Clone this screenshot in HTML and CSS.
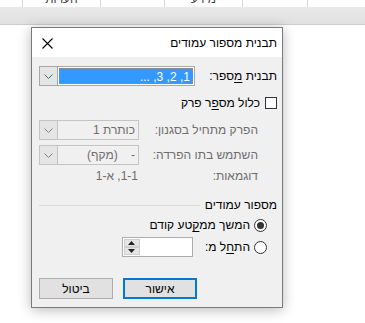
FILE: index.html
```html
<!DOCTYPE html>
<html lang="he">
<head>
    <meta charset="UTF-8">
    <title>תבנית מספור עמודים</title>
    <link rel="stylesheet" href="styles.css">
</head>
<body>
    <div class="ribbon">
        <div class="cell c1"></div>
        <div class="cell c2"><span>הערות</span></div>
        <div class="cell c3"></div>
        <div class="cell c4"><span>מידע</span></div>
        <div class="cell c5"></div>
        <div class="cell c6"></div>
    </div>
    <div class="band"></div>
    <div class="doc"></div>

    <div class="dialog" dir="rtl">
        <div class="titlebar">
            <span class="title">תבנית מספור עמודים</span>
            <span class="close">
                <svg width="11" height="11" viewBox="0 0 11 11"><path d="M0.5 0.5 L10.5 10.5 M10.5 0.5 L0.5 10.5" stroke="#000" stroke-width="1.1" fill="none"/></svg>
            </span>
        </div>
        <div class="content">
            <div class="row r-format">
                <label>תבנית <u>מ</u>ספר:</label>
                <div class="combo wide">
                    <span class="value"><span class="selected">1, 2, 3, ...</span></span>
                    <span class="arrow"><svg width="9" height="5" viewBox="0 0 9 5"><path d="M0.5 0.5 L4.5 4.5 L8.5 0.5" stroke="#606060" fill="none"/></svg></span>
                </div>
            </div>
            <div class="row r-check">
                <span class="checkbox"></span>
                <label>כלול מס<u>פ</u>ר פרק</label>
            </div>
            <div class="row r-sub disabled">
                <label>הפרק מתחיל בסגנון:</label>
                <div class="combo">
                    <span class="value">כותרת 1</span>
                    <span class="arrow"><svg width="9" height="5" viewBox="0 0 9 5"><path d="M0.5 0.5 L4.5 4.5 L8.5 0.5" stroke="#808080" fill="none"/></svg></span>
                </div>
            </div>
            <div class="row r-sub r-sep disabled">
                <label>השתמש בתו הפרדה:</label>
                <div class="combo">
                    <span class="value">-&nbsp;&nbsp;&nbsp;&nbsp;(מקף)</span>
                    <span class="arrow"><svg width="9" height="5" viewBox="0 0 9 5"><path d="M0.5 0.5 L4.5 4.5 L8.5 0.5" stroke="#808080" fill="none"/></svg></span>
                </div>
            </div>
            <div class="row r-sub r-examples disabled">
                <label>דוגמאות:</label>
                <span class="example">1-1, א-1</span>
            </div>
            <div class="group">
                <span class="group-title">מספור עמודים</span>
                <span class="group-line"></span>
            </div>
            <div class="row r-radio">
                <span class="radio checked"></span>
                <label>המשך ממ<u>ק</u>טע קודם</label>
            </div>
            <div class="row r-radio r-start">
                <span class="radio"></span>
                <label>הת<u>ח</u>ל מ:</label>
                <div class="spin">
                    <span class="spin-value"></span>
                    <span class="spin-buttons">
                        <span class="spin-btn"><svg width="7" height="4" viewBox="0 0 7 4"><path d="M0 4 L3.5 0 L7 4 Z" fill="#222"/></svg></span>
                        <span class="spin-btn"><svg width="7" height="4" viewBox="0 0 7 4"><path d="M0 0 L3.5 4 L7 0 Z" fill="#222"/></svg></span>
                    </span>
                </div>
            </div>
            <div class="buttons">
                <button class="btn default">אישור</button>
                <button class="btn">ביטול</button>
            </div>
        </div>
    </div>
</body>
</html>
```

FILE: styles.css
```css
body {
    margin: 0;
    padding: 0;
    background-color: #fff;
    font-family: "Liberation Sans", "DejaVu Sans", sans-serif;
    font-size: 12px;
    color: #000;
    overflow: hidden;
}

/* Word ribbon cut off at the top */
.ribbon {
    display: flex;
    height: 7px;
    overflow: hidden;
    background-color: #fff;
}

.ribbon .cell {
    height: 7px;
    border-right: 1px solid #d6d6d6;
    text-align: center;
    overflow: hidden;
    box-sizing: border-box;
}

.ribbon .cell span {
    display: block;
    line-height: 12px;
    margin-top: -7px;
    color: #444;
}

.c1 { width: 23px; }
.c2 { width: 78px; }
.c3 { width: 64px; }
.c4 { width: 78px; }
.c5 { width: 65px; }
.c6 { width: 57px; border-right: none !important; }

.band {
    height: 17px;
    background: linear-gradient(#e9e9e9, #e1e1e1);
    border-bottom: 1px solid #cdcdcd;
}

.doc {
    height: 300px;
    background-color: #fff;
}

/* The dialog window */
.dialog {
    position: absolute;
    left: 31px;
    top: 27px;
    width: 250px;
    border: 1px solid #7a7a7a;
    background-color: #f0f0f0;
    box-shadow: 0 2px 12px rgba(0, 0, 0, 0.28);
}

.titlebar {
    display: flex;
    align-items: center;
    height: 29px;
    background-color: #fff;
    padding: 0 5px 0 10px;
}

.title {
    padding-top: 1px;
}

.close {
    margin-right: auto;
    display: flex;
    margin-top: 2px;
}

.content {
    padding: 9px 5px 8px 7px;
}

.row {
    display: flex;
    align-items: center;
}

.row label {
    white-space: nowrap;
}

u {
    text-decoration: underline;
    text-underline-offset: 2px;
}

.r-format {
    height: 20px;
}

.r-format .combo {
    margin-right: auto;
}

.combo {
    display: flex;
    height: 20px;
    width: 100px;
    box-sizing: border-box;
    border: 1px solid #c4c4c4;
    background-color: #f0f0f0;
}

.combo.wide {
    width: 156px;
    border-color: #a8a8a8;
    background-color: #fff;
}

.combo .value {
    flex: 1;
    display: flex;
    align-items: center;
    padding-right: 3px;
    white-space: nowrap;
}

.combo.wide .value {
    padding: 1px;
}

.selected {
    display: block;
    width: 100%;
    height: 100%;
    box-sizing: border-box;
    background-color: #3399ff;
    color: #fff;
    outline: 1px dotted #d47a2a;
    outline-offset: -1px;
    padding: 2px 3px 0 0;
}

.combo .arrow {
    width: 17px;
    display: flex;
    align-items: center;
    justify-content: center;
    background-color: #e5e5e5;
    border-right: 1px solid #c4c4c4;
}

.combo.wide .arrow {
    border-right-color: #a8a8a8;
}

.r-check {
    height: 20px;
    margin-top: 7px;
}

.checkbox {
    width: 12px;
    height: 12px;
    box-sizing: border-box;
    border: 1px solid #333;
    background-color: #fff;
    margin-left: 5px;
}

.r-sub {
    padding-right: 19px;
}

.r-sub .combo,
.r-sub .example {
    margin-right: auto;
}

.disabled {
    color: #6d6d6d;
}

.r-sub:nth-child(3) {
    height: 20px;
    margin-top: 7px;
}

.r-sep {
    height: 20px;
    margin-top: 5px;
}

.r-examples {
    height: 16px;
    margin-top: 3px;
}

.example {
    width: 99px;
    text-align: right;
}

.group {
    display: flex;
    align-items: center;
    height: 14px;
    margin-top: 14px;
}

.group-title {
    white-space: nowrap;
}

.group-line {
    flex: 1;
    height: 1px;
    background-color: #dcdcdc;
    margin-right: 5px;
}

.r-radio {
    height: 16px;
    margin-top: 5px;
    padding-right: 10px;
}

.r-start {
    height: 20px;
    margin-top: 4px;
}

.radio {
    width: 13px;
    height: 13px;
    box-sizing: border-box;
    border: 1px solid #333;
    border-radius: 50%;
    background-color: #fff;
    margin-left: 4px;
    display: flex;
    align-items: center;
    justify-content: center;
}

.radio.checked::after {
    content: "";
    width: 7px;
    height: 7px;
    border-radius: 50%;
    background-color: #333;
}

.spin {
    display: flex;
    width: 71px;
    height: 20px;
    box-sizing: border-box;
    border: 1px solid #adadad;
    background-color: #fff;
    margin-right: 12px;
}

.spin-value {
    flex: 1;
}

.spin-buttons {
    display: flex;
    flex-direction: column;
    width: 16px;
    padding: 1px;
}

.spin-btn {
    flex: 1;
    display: flex;
    align-items: center;
    justify-content: center;
    background-color: #e5e5e5;
    border: 1px solid #cfcfcf;
}

.buttons {
    display: flex;
    justify-content: flex-end;
    gap: 10px;
    margin-top: 21px;
}

.btn {
    width: 74px;
    height: 21px;
    box-sizing: border-box;
    padding: 0;
    font-family: inherit;
    font-size: 12px;
    color: #000;
    background-color: #e1e1e1;
    border: 1px solid #adadad;
}

.btn.default {
    border: 2px solid #0078d7;
}
```
